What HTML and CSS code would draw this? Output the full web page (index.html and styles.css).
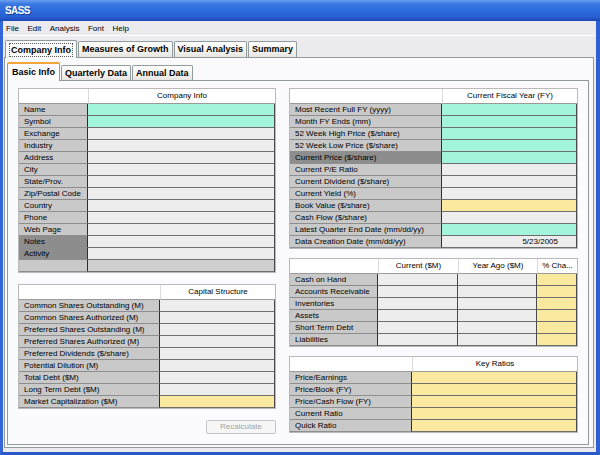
FILE: index.html
```html
<!DOCTYPE html>
<html>
<head>
<meta charset="utf-8">
<title>SASS</title>
<link rel="stylesheet" href="styles.css">
</head>
<body>
<div class="window">
  <div class="titlebar"><span class="title">SASS</span></div>
  <div class="frame">
    <div class="menubar">
      <span>File</span><span>Edit</span><span>Analysis</span><span>Font</span><span>Help</span>
    </div>
    <div class="tabrow">
      <div class="tab sel"><span class="focus">Company Info</span></div>
      <div class="tab">Measures of Growth</div>
      <div class="tab">Visual Analysis</div>
      <div class="tab">Summary</div>
    </div>
    <div class="outer-panel">
      <div class="subtabs">
        <div class="stab sel">Basic Info</div>
        <div class="stab">Quarterly Data</div>
        <div class="stab">Annual Data</div>
      </div>
      <div class="inner-panel">
        <div class="col left">
          <div class="tbl ci">
            <div class="h"></div><div class="h">Company Info</div>
            <div class="l">Name</div><div class="v cy"></div>
            <div class="l">Symbol</div><div class="v cy"></div>
            <div class="l">Exchange</div><div class="v"></div>
            <div class="l">Industry</div><div class="v"></div>
            <div class="l">Address</div><div class="v"></div>
            <div class="l">City</div><div class="v"></div>
            <div class="l">State/Prov.</div><div class="v"></div>
            <div class="l">Zip/Postal Code</div><div class="v"></div>
            <div class="l">Country</div><div class="v"></div>
            <div class="l">Phone</div><div class="v"></div>
            <div class="l">Web Page</div><div class="v"></div>
            <div class="l dk">Notes</div><div class="v"></div>
            <div class="l dk">Activity</div><div class="v"></div>
            <div class="l"></div><div class="v gr"></div>
          </div>
          <div class="tbl cap">
            <div class="h"></div><div class="h">Capital Structure</div>
            <div class="l">Common Shares Outstanding (M)</div><div class="v"></div>
            <div class="l">Common Shares Authorized (M)</div><div class="v"></div>
            <div class="l">Preferred Shares Outstanding (M)</div><div class="v"></div>
            <div class="l">Preferred Shares Authorized (M)</div><div class="v"></div>
            <div class="l">Preferred Dividends ($/share)</div><div class="v"></div>
            <div class="l">Potential Dilution (M)</div><div class="v"></div>
            <div class="l">Total Debt ($M)</div><div class="v"></div>
            <div class="l">Long Term Debt ($M)</div><div class="v"></div>
            <div class="l">Market Capitalization ($M)</div><div class="v ye"></div>
          </div>
          <div class="btn-row"><button class="btn" disabled>Recalculate</button></div>
        </div>
        <div class="col right">
          <div class="tbl fy">
            <div class="h"></div><div class="h">Current Fiscal Year (FY)</div>
            <div class="l">Most Recent Full FY (yyyy)</div><div class="v cy"></div>
            <div class="l">Month FY Ends (mm)</div><div class="v cy"></div>
            <div class="l">52 Week High Price ($/share)</div><div class="v cy"></div>
            <div class="l">52 Week Low Price ($/share)</div><div class="v cy"></div>
            <div class="l dk">Current Price ($/share)</div><div class="v cy"></div>
            <div class="l">Current P/E Ratio</div><div class="v"></div>
            <div class="l">Current Dividend ($/share)</div><div class="v"></div>
            <div class="l">Current Yield (%)</div><div class="v"></div>
            <div class="l">Book Value ($/share)</div><div class="v ye"></div>
            <div class="l">Cash Flow ($/share)</div><div class="v"></div>
            <div class="l">Latest Quarter End Date (mm/dd/yy)</div><div class="v cy"></div>
            <div class="l">Data Creation Date (mm/dd/yy)</div><div class="v num">5/23/2005</div>
          </div>
          <div class="tbl cur">
            <div class="h"></div><div class="h">Current ($M)</div><div class="h">Year Ago ($M)</div><div class="h">% Cha...</div>
            <div class="l">Cash on Hand</div><div class="v"></div><div class="v"></div><div class="v ye"></div>
            <div class="l">Accounts Receivable</div><div class="v"></div><div class="v"></div><div class="v ye"></div>
            <div class="l">Inventories</div><div class="v"></div><div class="v"></div><div class="v ye"></div>
            <div class="l">Assets</div><div class="v"></div><div class="v"></div><div class="v ye"></div>
            <div class="l">Short Term Debt</div><div class="v"></div><div class="v"></div><div class="v ye"></div>
            <div class="l">Liabilities</div><div class="v"></div><div class="v"></div><div class="v ye"></div>
          </div>
          <div class="tbl kr">
            <div class="h"></div><div class="h">Key Ratios</div>
            <div class="l">Price/Earnings</div><div class="v ye"></div>
            <div class="l">Price/Book (FY)</div><div class="v ye"></div>
            <div class="l">Price/Cash Flow (FY)</div><div class="v ye"></div>
            <div class="l">Current Ratio</div><div class="v ye"></div>
            <div class="l">Quick Ratio</div><div class="v ye"></div>
          </div>
        </div>
      </div>
    </div>
  </div>
</div>
</body>
</html>
```

FILE: styles.css
```css
* { box-sizing: border-box; }
html, body {
  margin: 0;
  padding: 0;
  width: 600px;
  height: 455px;
  overflow: hidden;
  font-family: "Liberation Sans", Arial, sans-serif;
  font-size: 8px;
  color: #000;
}
.window {
  width: 600px;
  height: 455px;
  display: flex;
  flex-direction: column;
}
.titlebar {
  height: 21px;
  flex: none;
  background: linear-gradient(#6d9ff0 0, #3a78e2 18%, #2d6cdc 50%, #275fd2 80%, #1c48b4 100%);
  display: flex;
  align-items: center;
  padding-left: 5px;
}
.title {
  color: #fff;
  font-weight: bold;
  font-size: 10px;
  letter-spacing: -0.6px;
  text-shadow: 1px 1px 0 #1a3f9a;
}
.frame {
  flex: 1;
  display: flex;
  flex-direction: column;
  border-left: 3px solid #3466d8;
  border-right: 4px solid #2e60d4;
  border-bottom: 3px solid #2a58c8;
  background: #ebeaee;
}
.menubar {
  height: 15px;
  flex: none;
  display: flex;
  align-items: center;
  gap: 8.5px;
  padding-left: 3px;
  border-bottom: 1px solid #fdfdff;
}
.tabrow {
  height: 21px;
  flex: none;
  display: flex;
  align-items: flex-end;
  gap: 1px;
  padding-left: 2px;
}
.tab {
  height: 16px;
  padding: 0 3px;
  border: 1px solid #919b9c;
  border-bottom: none;
  border-radius: 2px 2px 0 0;
  background: linear-gradient(#ffffff, #f3f3ef 60%, #e6e5e0);
  font-weight: bold;
  font-size: 9px;
  line-height: 15px;
  white-space: nowrap;
}
.tab.sel {
  height: 18px;
  background: #fcfcfe;
  margin-bottom: -1px;
  position: relative;
  z-index: 1;
  padding: 2px 3px 0;
  line-height: 12px;
}
.focus {
  display: inline-block;
  border: 1px dotted #5a5a5a;
  padding: 0 1px;
  line-height: 12px;
}
.outer-panel {
  flex: 1;
  margin: 0 2px 4px 1px;
  border: 1px solid #919b9c;
  background: #fafafc;
  padding: 4px 4px 2px 2px;
  display: flex;
  flex-direction: column;
}
.subtabs {
  height: 18px;
  flex: none;
  display: flex;
  align-items: flex-end;
  gap: 1px;
}
.stab {
  height: 15px;
  padding: 0 3px;
  border: 1px solid #919b9c;
  border-bottom: none;
  border-radius: 2px 2px 0 0;
  background: linear-gradient(#ffffff, #f3f3ef 60%, #e6e5e0);
  font-weight: bold;
  font-size: 9px;
  line-height: 14px;
  white-space: nowrap;
}
.stab.sel {
  height: 19px;
  margin-bottom: -1px;
  position: relative;
  z-index: 1;
  background: #fcfcfe;
  border-top: 2px solid #f0a53a;
  padding: 1px 4px 0;
  line-height: 14px;
}
.inner-panel {
  flex: 1;
  border: 1px solid #919b9c;
  background: #fbfbfd;
  padding: 7px 10px;
  display: flex;
  gap: 13px;
}
.col {
  display: flex;
  flex-direction: column;
}
.col.left { width: 258px; gap: 11px; }
.col.right { width: 289px; gap: 9px; }
.tbl {
  display: grid;
  border: 1px solid #b9b9b9;
  background: #fff;
}
.ci { grid-template-columns: 69px 1fr; }
.cap { grid-template-columns: 141px 1fr; }
.fy { grid-template-columns: 152px 1fr; }
.cur { grid-template-columns: 88px 80px 79px 1fr; }
.kr { grid-template-columns: 122px 1fr; }
.h {
  height: 15px;
  line-height: 14px;
  text-align: center;
  background: #fff;
  border-bottom: 1px solid #9a9a9a;
  white-space: nowrap;
  overflow: hidden;
}
.h + .h { border-left: 1px solid #dadada; }
.l {
  height: 12px;
  line-height: 11px;
  padding-left: 5px;
  background: #c9c9c9;
  border-bottom: 1px solid #8e8e8e;
  border-right: 1px solid #2e2e2e;
  white-space: nowrap;
  overflow: hidden;
}
.l.dk { background: #8d8d8d; }
.v {
  height: 12px;
  line-height: 11px;
  background: #ededed;
  border-bottom: 1px solid #6e6e6e;
  border-right: 1px solid #4a4a4a;
}
.v.cy { background: #a2f4dc; }
.v.ye { background: #fce9a0; }
.v.gr { background: #cfcfcf; }
.v.num { text-align: right; padding-right: 18px; }
.btn-row {
  display: flex;
  justify-content: flex-end;
}
.btn {
  width: 70px;
  height: 14px;
  padding: 0;
  border: 1px solid #c4c4c6;
  border-radius: 2px;
  background: #f6f6f6;
  color: #a3a3a3;
  font-family: "Liberation Sans", Arial, sans-serif;
  font-size: 8px;
  line-height: 12px;
}
```
